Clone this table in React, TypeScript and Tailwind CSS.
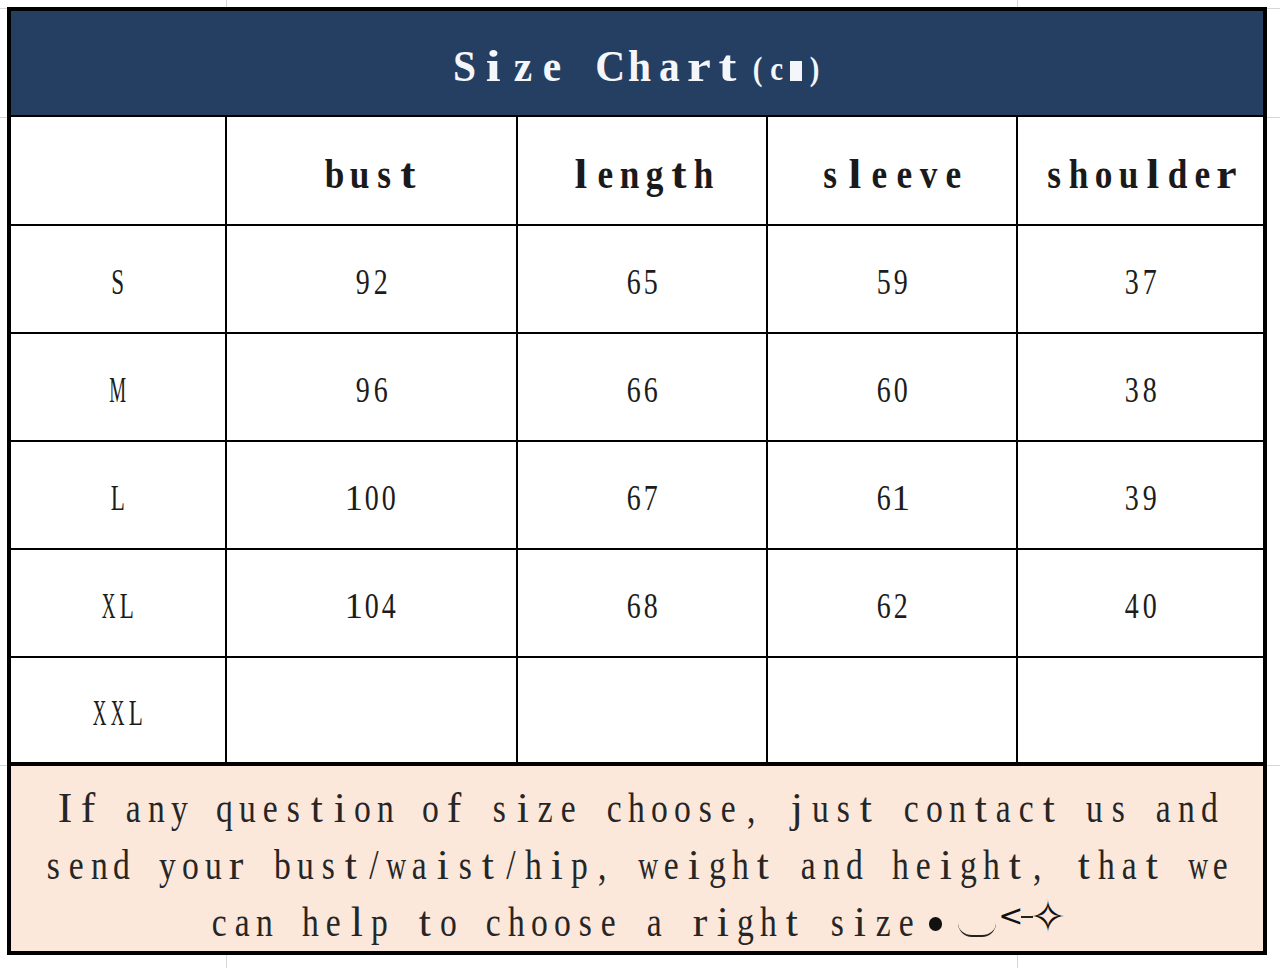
// Size chart rendered as a spreadsheet-style table: navy title band, grid of
// measurements with black rules, and a peach note band underneath.
// The source uses a fixed-pitch serif (SimSun latin); we fake it by putting each
// glyph of a serif face into a fixed-width slot.

const serif = "font-['Liberation_Serif','DejaVu_Serif',serif]";

const columns = ["bust", "length", "sleeve", "shoulder"];

const rows: { size: string; values: string[] }[] = [
  { size: "S", values: ["92", "65", "59", "37"] },
  { size: "M", values: ["96", "66", "60", "38"] },
  { size: "L", values: ["100", "67", "61", "39"] },
  { size: "XL", values: ["104", "68", "62", "40"] },
  { size: "XXL", values: ["", "", "", ""] },
];

const noteLines = [
  "If any question of size choose, just contact us and",
  "send your bust/waist/hip, weight and height, that we",
];

const WIDE = "mwMWX";
const NARROW = "iljtfrI1";

function slotClass(ch: string): string {
  if (WIDE.includes(ch)) return "inline-block scale-x-[0.82]";
  if (NARROW.includes(ch)) return "inline-block scale-x-[1.3]";
  return "inline-block";
}

/** Fixed-pitch text: every character gets its own slot of `cell` width. */
function Mono({ text, cell, glyph }: { text: string; cell: string; glyph: string }) {
  return (
    <span className="inline-flex">
      {[...text].map((ch, i) => (
        <span key={i} className={`${cell} inline-flex justify-center shrink-0`}>
          <span className={slotClass(ch)}>
            <span className={`inline-block ${glyph}`}>{ch === " " ? "\u00a0" : ch}</span>
          </span>
        </span>
      ))}
    </span>
  );
}

const numGlyph = `${serif} text-[35px] leading-none scale-x-[0.8] text-[#1c1c1c]`;

function Cell({ text }: { text: string }) {
  return (
    <div className="bg-white flex items-center justify-center pt-[6px]">
      <Mono text={text} cell="w-[17.5px]" glyph={numGlyph} />
    </div>
  );
}

function RowLabel({ text }: { text: string }) {
  return (
    <div className="bg-white flex items-center justify-center pt-[6px]">
      <Mono
        text={text}
        cell="w-[18px]"
        glyph={`${serif} text-[35px] leading-none scale-x-[0.66] text-[#1c1c1c]`}
      />
    </div>
  );
}

const noteGlyph = `${serif} text-[42px] leading-none scale-x-[0.8] text-[#262626]`;
const titleGlyph = `${serif} text-[45px] leading-none font-bold scale-x-[0.92] text-[#f4f6fa]`;
const titleSmall = `${serif} text-[34px] leading-none font-bold scale-x-[0.85] text-[#f4f6fa]`;

export default function App() {
  return (
    <div className="w-[1280px] h-[968px] bg-white pt-[7px] pl-[7px] bg-[linear-gradient(to_right,transparent_226px,#d6d6d6_226px,#d6d6d6_227px,transparent_227px),linear-gradient(to_right,transparent_1017px,#d6d6d6_1017px,#d6d6d6_1018px,transparent_1018px),linear-gradient(to_bottom,transparent_8px,#d6d6d6_8px,#d6d6d6_9px,transparent_9px),linear-gradient(to_bottom,transparent_117px,#d6d6d6_117px,#d6d6d6_118px,transparent_118px),linear-gradient(to_bottom,transparent_765px,#d6d6d6_765px,#d6d6d6_766px,transparent_766px)]">
      <div className="w-[1260px] border-4 border-black flex flex-col bg-white">
        <div className="grid grid-cols-[214px_289px_248px_248px_245px] grid-rows-[104px_107px_106px_106px_106px_106px_104px] gap-[2px] bg-black">
          {/* title band */}
          <div className="col-span-5 bg-[#243f62] flex items-center justify-center pt-[6px]">
            <Mono text="Size Chart" cell="w-[29.3px]" glyph={titleGlyph} />
            <span className="ml-[6px] mt-[6px] inline-flex items-center">
              <Mono text="(c" cell="w-[19px]" glyph={titleSmall} />
              <span className="w-[19px] flex justify-center">
                <span className="w-[12px] h-[20px] bg-[#f4f6fa] mt-[3px]" />
              </span>
              <Mono text=")" cell="w-[19px]" glyph={titleSmall} />
            </span>
          </div>

          {/* column headings */}
          <div className="bg-white" />
          {columns.map(c => (
            <div key={c} className="bg-white flex items-center justify-center pt-[6px]">
              <Mono
                text={c}
                cell="w-[24.6px]"
                glyph={`${serif} text-[42px] leading-none font-bold scale-x-[0.84] text-[#1a1a1a]`}
              />
            </div>
          ))}

          {/* measurement rows */}
          {rows.map(r => (
            <div key={r.size} className="contents">
              <RowLabel text={r.size} />
              {r.values.map((v, i) => (
                <Cell key={i} text={v} />
              ))}
            </div>
          ))}
        </div>

        {/* note band */}
        <div className="border-t-4 border-black bg-[#fce8db] h-[189px] flex flex-col items-center justify-center pt-[14px]">
          {noteLines.map(line => (
            <div key={line} className="h-[58px] flex items-center justify-center">
              <Mono text={line} cell="w-[22.9px]" glyph={noteGlyph} />
            </div>
          ))}
          <div className="h-[58px] flex items-center justify-center">
            <Mono text="can help to choose a right size" cell="w-[22.9px]" glyph={noteGlyph} />
            <span className="ml-[12px] h-[58px] flex items-start text-[#111] font-['DejaVu_Sans',sans-serif]">
              {/* kaomoji: eye, mouth, wink, sparkle */}
              <span className="w-[13px] h-[14px] rounded-full bg-[#111] mt-[24px]" />
              <span className="w-[38px] h-[14px] ml-[16px] mt-[30px] border-b-2 border-[#222] rounded-b-full" />
              <span className="text-[30px] leading-none ml-[2px] mt-[8px]">&lt;</span>
              <span className="w-[12px] h-[2px] bg-[#222] mt-[23px] -ml-[2px]" />
              <span className="text-[44px] leading-none -ml-[4px] mt-[2px]">✧</span>
            </span>
          </div>
        </div>
      </div>
    </div>
  );
}
